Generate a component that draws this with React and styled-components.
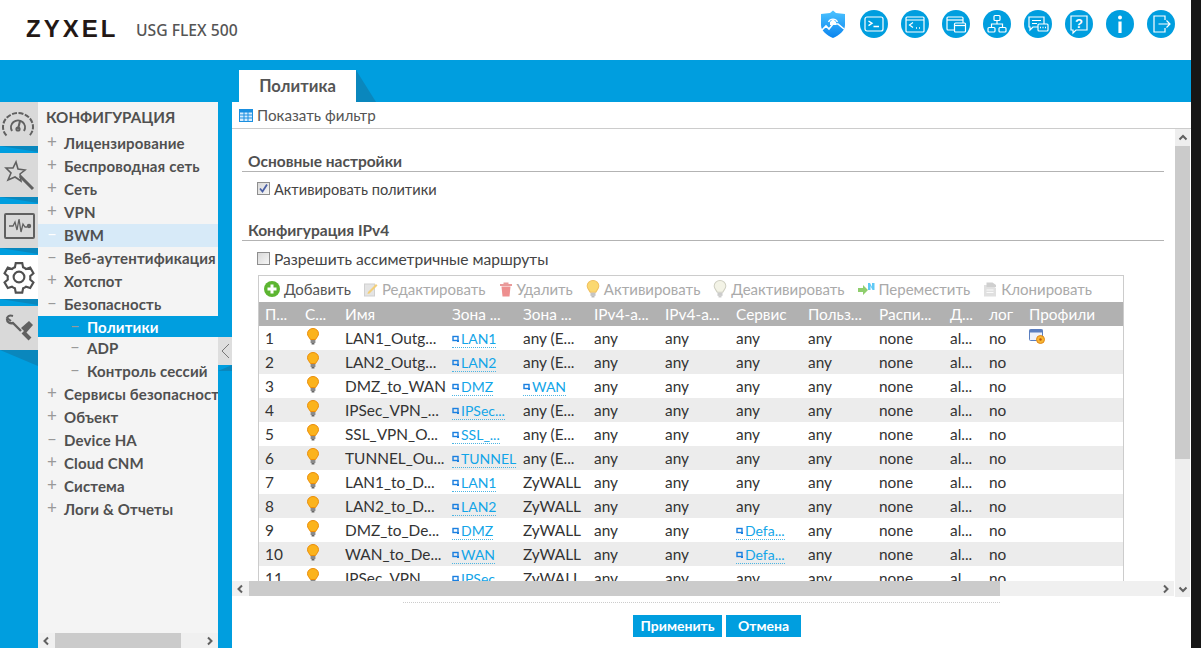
import React from "react";
import styled, { createGlobalStyle } from "styled-components";

const BLUE = "#009edf";
const DARK_BLUE = "#0a87bd";

const GlobalStyle = createGlobalStyle`
  html, body {
    margin: 0;
    padding: 0;
    background: #161616;
  }
  body {
    font-family: "Lato", "Noto Sans", sans-serif;
    overflow: hidden;
  }
`;

const Page = styled.div`
  display: flex;
  width: 1201px;
  height: 648px;
  overflow: hidden;
`;

const Main = styled.div`
  width: 1191px;
  display: flex;
  flex-direction: column;
  background: #fff;
`;

const Header = styled.header`
  height: 60px;
  display: flex;
  align-items: center;
  padding: 0 16px 0 26px;
  flex-shrink: 0;
`;

const Logo = styled.div`
  font-family: "Liberation Sans", sans-serif;
  font-weight: 700;
  font-size: 24px;
  letter-spacing: 3px;
  color: #231815;
  width: 110px;
  margin-bottom: 2px;
`;

const Model = styled.div`
  font-family: "Noto Sans", sans-serif;
  font-size: 15.7px;
  font-weight: 500;
  color: #555;
  margin-bottom: 1px;
`;

const HeaderIcons = styled.div`
  margin-left: auto;
  margin-bottom: 12px;
  display: flex;
  gap: 13px;
`;

const IconDisc = styled.svg`
  width: 28px;
  height: 28px;
  display: block;
`;

const TabBand = styled.div`
  height: 42px;
  flex-shrink: 0;
  background: ${BLUE};
  display: flex;
  align-items: flex-end;
  padding-left: 239px;
`;

const Tab = styled.div`
  width: 117px;
  height: 32px;
  background: #fff;
  color: #555;
  font-size: 16.6px;
  font-weight: 700;
  display: flex;
  align-items: center;
  justify-content: center;
  position: relative;
  &::after {
    content: "";
    position: absolute;
    left: 100%;
    top: 0;
    width: 20px;
    height: 32px;
    background: ${DARK_BLUE};
    clip-path: polygon(0 0, 100% 100%, 0 100%);
  }
`;

const Body = styled.div`
  flex: 1;
  min-height: 0;
  display: flex;
  background: ${BLUE};
`;

const Rail = styled.nav`
  width: 38px;
  flex-shrink: 0;
  display: flex;
  flex-direction: column;
  gap: 7px;
`;

const RailItem = styled.div`
  height: 44px;
  background: ${(p) => (p.$active ? "#fff" : "#d9d9d9")};
  display: flex;
  align-items: center;
  justify-content: center;
  position: relative;
  &::after {
    content: "";
    position: absolute;
    left: 0;
    top: 100%;
    width: 38px;
    height: ${(p) => (p.$last ? "16px" : "6px")};
    background: ${DARK_BLUE};
    clip-path: polygon(0 0, 100% 0, 100% 100%);
  }
`;

const NavPanel = styled.div`
  width: 180px;
  flex-shrink: 0;
  display: flex;
  flex-direction: column;
  background: #f4f4f4;
`;

const NavScroll = styled.div`
  flex: 1;
  min-height: 0;
  overflow: hidden;
`;

const NavTitle = styled.div`
  height: 30px;
  line-height: 30px;
  padding-left: 8px;
  font-size: 15.2px;
  font-weight: 700;
  color: #505050;
`;

const NavRow = styled.div`
  height: ${(p) => (p.$selected ? "21px" : "23px")};
  box-sizing: border-box;
  padding-bottom: ${(p) => (p.$selected ? "0" : "2px")};
  display: flex;
  align-items: center;
  white-space: nowrap;
  overflow: hidden;
  padding-left: ${(p) => (p.$sub ? "32px" : "9px")};
  background: ${(p) =>
    p.$selected ? BLUE : p.$current ? "#d7eaf8" : "transparent"};
  color: ${(p) => (p.$selected ? "#fff" : "#505050")};
  font-size: 15px;
  letter-spacing: 0.15px;
  font-weight: 700;
`;

const NavSign = styled.span`
  width: 17px;
  flex-shrink: 0;
  font-size: 17px;
  font-weight: 400;
  line-height: 1;
  color: ${(p) => (p.$light ? "#fff" : "#999")};
  margin-top: -2px;
`;

const HScrollBar = styled.div`
  height: 15px;
  flex-shrink: 0;
  margin-top: ${(p) => (p.$gap ? "1px" : "0")};
  background: #f0f0f0;
  display: flex;
  align-items: stretch;
`;

const ScrollArrow = styled.div`
  flex-shrink: 0;
  width: 17px;
  display: flex;
  align-items: center;
  justify-content: center;
`;

const ScrollThumb = styled.div`
  width: ${(p) => p.$w}px;
  background: #cbcbcb;
  flex-shrink: 0;
`;

const ScrollRest = styled.div`
  flex: 1;
`;

const Gutter = styled.div`
  width: 14px;
  flex-shrink: 0;
  padding-top: 235px;
`;

const Collapse = styled.div`
  height: 28px;
  background: #dedede;
  display: flex;
  align-items: center;
  justify-content: center;
  position: relative;
  &::after {
    content: "";
    position: absolute;
    left: 0;
    top: 100%;
    width: 14px;
    height: 6px;
    background: ${DARK_BLUE};
    clip-path: polygon(0 100%, 100% 0, 100% 100%);
  }
`;

const Content = styled.main`
  flex: 1;
  min-width: 0;
  display: flex;
  flex-direction: column;
  background: #fff;
`;

const FilterBar = styled.div`
  height: 26px;
  flex-shrink: 0;
  border-bottom: 1px solid #ccc;
  display: flex;
  align-items: center;
  gap: 4px;
  padding-left: 7px;
  font-size: 15.2px;
  color: #555;
`;

const Middle = styled.div`
  height: 468px;
  flex-shrink: 0;
  display: flex;
`;

const Left = styled.div`
  width: 942px;
  flex-shrink: 0;
  display: flex;
  flex-direction: column;
`;

const Scroller = styled.div`
  height: 452px;
  overflow: hidden;
  padding-left: 10px;
  flex-shrink: 0;
`;

const SectionTitle = styled.div`
  margin-top: ${(p) => p.$top}px;
  width: 922px;
  height: 21px;
  box-sizing: border-box;
  padding-left: 6px;
  line-height: 20px;
  border-bottom: 1px solid #b3b3b3;
  font-size: 15.5px;
  font-weight: 700;
  color: #505050;
`;

const CheckRow = styled.label`
  display: flex;
  align-items: center;
  gap: 4px;
  height: 18px;
  margin-top: ${(p) => p.$top}px;
  padding-left: 15px;
  font-size: ${(p) => p.$size}px;
  color: #444;
`;

const CheckBox = styled.span`
  width: 13px;
  height: 13px;
  margin-top: -2px;
  box-sizing: border-box;
  border: 1px solid #8e8e8e;
  background: linear-gradient(135deg, #d8d8d8, #f6f6f6);
  display: flex;
  align-items: center;
  justify-content: center;
`;

const TableWrap = styled.div`
  width: 866px;
  margin: 7px 0 0 16px;
  box-sizing: border-box;
  border: 1px solid #ccc;
  border-bottom: 0;
`;

const Toolbar = styled.div`
  height: 26px;
  display: flex;
  align-items: center;
  padding-left: 5px;
  gap: 13px;
  font-size: 15px;
`;

const ToolButton = styled.span`
  display: flex;
  align-items: center;
  gap: 4px;
  color: ${(p) => (p.$enabled ? "#555" : "#aaa")};
  white-space: nowrap;
`;

const Table = styled.table`
  border-collapse: collapse;
  table-layout: fixed;
  width: 864px;
  font-size: 15.4px;
`;

const Th = styled.th`
  height: 24px;
  padding: 0 0 0 6px;
  background: #b1b1b1;
  color: #fff;
  font-weight: 400;
  text-align: left;
  white-space: nowrap;
  overflow: hidden;
`;

const Tr = styled.tr`
  background: ${(p) => (p.$odd ? "#ececec" : "#fff")};
`;

const Td = styled.td`
  height: 24px;
  padding: 0 0 0 6px;
  color: #333;
  white-space: nowrap;
  overflow: hidden;
`;

const ObjLink = styled.span`
  display: inline-flex;
  align-items: center;
  gap: 1px;
  height: 17px;
  font-size: 14px;
  color: #12a5e8;
  border-bottom: 1px dotted #4db5e3;
`;

const BulbSvg = styled.svg`
  display: block;
  flex-shrink: 0;
  margin: ${(p) => (p.$inTable ? "-3px 0 0 2px" : "0")};
`;

const VScrollBar = styled.div`
  width: 15px;
  height: 468px;
  flex-shrink: 0;
  margin-left: 1px;
  background: #eeeeee;
  display: flex;
  flex-direction: column;
`;

const VArrow = styled.div`
  height: 17px;
  flex-shrink: 0;
  display: flex;
  align-items: center;
  justify-content: center;
`;

const VThumb = styled.div`
  height: 313px;
  background: #cbcbcb;
  flex-shrink: 0;
`;

const Footer = styled.footer`
  flex: 1;
  display: flex;
  flex-direction: column;
  align-items: flex-start;
`;

const DottedRule = styled.div`
  width: 597px;
  margin: 5px 0 0 171px;
  border-top: 1px dotted #ccc;
`;

const Buttons = styled.div`
  display: flex;
  gap: 4px;
  margin: 12px 0 0 401px;
`;

const Button = styled.button`
  height: 22px;
  width: ${(p) => p.$w}px;
  border: 0;
  padding: 0 0 1px;
  background: ${BLUE};
  color: #fff;
  font-family: inherit;
  font-size: 14px;
  font-weight: 700;
`;

const Edge = styled.div`
  flex: 1;
  background: #161616;
`;

const Disc = ({ children }) => (
  <IconDisc viewBox="0 0 28 28" fill="none" stroke="#fff" strokeWidth="1.2">
    <circle cx="14" cy="14" r="14" fill={BLUE} stroke="none" />
    {children}
  </IconDisc>
);

const ShieldIcon = () => (
  <IconDisc viewBox="0 0 28 28">
    <defs>
      <linearGradient id="shield" x1="0" y1="0" x2="0" y2="1">
        <stop offset="0" stopColor="#4cc3ff" />
        <stop offset="1" stopColor="#0a84ef" />
      </linearGradient>
    </defs>
    <path d="M14 0.5 L17 3 L26 4 V15 C26 21 20 25.5 14 28 C8 25.5 2 21 2 15 V4 L11 3 Z" fill="url(#shield)" />
    <path d="M9.5 12 A5 5 0 0 1 18.5 12" fill="none" stroke="#fff" strokeWidth="1.3" />
    <path d="M11 12 L14 9 L17 12 V15 H11 Z" fill="#fff" />
    <path d="M3 20 L7 16 L10 19 L14 14 L19 14 L25 19" fill="none" stroke="#fff" strokeWidth="1.6" />
  </IconDisc>
);

const headerIcons = [
  <Disc key="cli">
    <rect x="5" y="7" width="18" height="14" rx="2" />
    <path d="M8.5 11 L12 13.3 L8.5 15.6 M13.5 16.5 H19" strokeWidth="1.4" />
  </Disc>,
  <Disc key="web">
    <rect x="5" y="7" width="18" height="15" rx="1" />
    <path d="M5 10 H23 M12 12.5 L8.5 15 L12 17.5" />
    <path d="M15 18 H16 M18 18 H19" strokeWidth="1.4" />
  </Disc>,
  <Disc key="windows">
    <rect x="5" y="7" width="16" height="13" rx="1" />
    <path d="M5 10 H21" />
    <rect x="12.5" y="13" width="11" height="9" rx="1" fill={BLUE} />
    <path d="M12.5 15.5 H23.5" />
  </Disc>,
  <Disc key="net">
    <rect x="11" y="5.5" width="6" height="5" rx="1" />
    <rect x="5" y="17.5" width="7" height="4.5" rx="1" />
    <rect x="16" y="17.5" width="7" height="4.5" rx="1" />
    <path d="M14 10.5 V14 M8.5 17.5 V14 H19.5 V17.5" />
  </Disc>,
  <Disc key="chat">
    <path d="M5 7 H20 V17 H9 L6 20 V17 H5 Z" />
    <path d="M8 10.5 H17 M8 13.5 H13" />
    <rect x="14" y="14" width="10" height="7" rx="1" fill={BLUE} />
    <path d="M16 17.5 H17 M18.5 17.5 H19.5 M21 17.5 H22" strokeWidth="1.3" />
  </Disc>,
  <Disc key="help">
    <path d="M6 6 H22 V20 H11 L8 23 V20 H6 Z" />
    <text x="14" y="18" fontSize="13" fontWeight="700" textAnchor="middle" fill="#fff" stroke="none" fontFamily="Liberation Sans">?</text>
  </Disc>,
  <Disc key="info">
    <circle cx="14" cy="7.5" r="2" fill="#fff" stroke="none" />
    <path d="M14 11.5 V23" strokeWidth="3.2" />
  </Disc>,
  <Disc key="exit">
    <path d="M18 10 V6 H7 V22 H18 V18" />
    <path d="M11.5 14 H23 M19.5 10.5 L23 14 L19.5 17.5" />
  </Disc>,
];

const RailSvg = styled.svg`
  width: 34px;
  height: 34px;
  display: block;
`;

const railIcons = [
  <RailSvg key="gauge" viewBox="1 -2 34 34" fill="none" stroke="#606060" strokeWidth="2">
    <path d="M5.5 26.5 C3 24 2 21 2 18 C2 10 9 4 17 4 C25 4 32 10 32 18 C32 21 31 24 28.5 26.5" strokeDasharray="5 1.5" />
    <path d="M11 22 A7 7 0 1 1 23 22" />
    <path d="M17 20 L19 12" />
    <circle cx="17" cy="20" r="1.6" />
  </RailSvg>,
  <RailSvg key="wand" viewBox="0 0 34 34" fill="none" stroke="#606060" strokeWidth="2">
    <path d="M14 4 L16 11 L23 12 L18 16 L19 23 L13 19 L6 22 L9 15 L4 10 L11 10 Z" strokeWidth="1.6" />
    <path d="M18 18 L31 31" strokeWidth="3" />
  </RailSvg>,
  <RailSvg key="monitor" viewBox="0 0 34 34" fill="none" stroke="#606060" strokeWidth="2">
    <rect x="3" y="5" width="29" height="24" rx="1" />
    <path d="M7 17 H11 L13 13 L15 21 L17 10 L19 23 L21 15 L23 18 H25" strokeWidth="1.3" />
    <circle cx="27" cy="17" r="1.2" />
  </RailSvg>,
  <RailSvg key="gear" viewBox="0 0 24 24" fill="none" stroke="#505050" strokeWidth="1.5">
    <path d="M9.7 2.2 h4.6 l.6 3 a7.5 7.5 0 0 1 2.1 1.2 l2.9 -1 2.3 4 -2.3 2 a7.5 7.5 0 0 1 0 2.4 l2.3 2 -2.3 4 -2.9 -1 a7.5 7.5 0 0 1 -2.1 1.2 l-.6 3 h-4.6 l-.6 -3 a7.5 7.5 0 0 1 -2.1 -1.2 l-2.9 1 -2.3 -4 2.3 -2 a7.5 7.5 0 0 1 0 -2.4 l-2.3 -2 2.3 -4 2.9 1 a7.5 7.5 0 0 1 2.1 -1.2 z" />
    <circle cx="12" cy="12" r="3.8" />
  </RailSvg>,
  <RailSvg key="tools" viewBox="0 0 34 34" fill="none" stroke="#606060" strokeWidth="2.4">
    <path d="M5 8 C5 11 8 13 11 12 L19 20" />
    <path d="M11 5 C8 4 6 5 5 7 L9 10" strokeWidth="2" />
    <path d="M21 21 L28 28" strokeWidth="4" />
    <path d="M19 17 L27 10 L31 14 L24 22 Z" fill="#606060" stroke="none" />
  </RailSvg>,
];

const Chevron = ({ dir }) => {
  const paths = {
    left: "M6 1.5 L2.5 5 L6 8.5",
    right: "M3 1.5 L6.5 5 L3 8.5",
    up: "M1.5 6.5 L5 3 L8.5 6.5",
    down: "M1.5 3.5 L5 7 L8.5 3.5",
  };
  return (
    <svg width="10" height="10" viewBox="0 0 10 10" fill="none" stroke="#606060" strokeWidth="2">
      <path d={paths[dir]} />
    </svg>
  );
};

const Bulb = ({ off, inTable }) => (
  <BulbSvg $inTable={inTable} width={inTable ? 12 : 14} height={inTable ? 17 : 18} viewBox="0 0 12 17">
    <path
      d="M6 0.5 C9 0.5 11.5 2.7 11.5 5.7 C11.5 8.2 9.5 9.5 8.6 11.5 H3.4 C2.5 9.5 0.5 8.2 0.5 5.7 C0.5 2.7 3 0.5 6 0.5 Z"
      fill={off ? "#f3f3e6" : inTable ? "#fbb31c" : "#fbd870"}
      stroke={off ? "#cfcfc2" : inTable ? "#ea8d0c" : "#f0c060"}
    />
    <rect x="3.6" y="12" width="4.8" height="3" fill={off ? "#ccc" : inTable ? "#8a8a8a" : "#c4c4c4"} />
    <rect x="4.6" y="15" width="2.8" height="1.5" fill={off ? "#ccc" : inTable ? "#666" : "#bbb"} />
  </BulbSvg>
);

const ZoneMark = () => (
  <svg width="8" height="8" viewBox="0 0 8 8">
    <rect x="1" y="1.5" width="5" height="4" fill="none" stroke="#1a7fe0" strokeWidth="1.4" />
    <rect x="5" y="5" width="2" height="2" fill="#1a7fe0" />
  </svg>
);

const ProfileIcon = () => (
  <svg width="17" height="16" viewBox="0 0 17 16">
    <rect x="0.5" y="0.5" width="13" height="11" rx="1" fill="#eef2fa" stroke="#5b7fc0" />
    <rect x="0.5" y="0.5" width="13" height="3" fill="#5b7fc0" />
    <circle cx="11.5" cy="10.5" r="4" fill="#f7b731" stroke="#e0861a" />
    <circle cx="11.5" cy="10.5" r="1.2" fill="#c0560a" />
  </svg>
);

const GridIcon = () => (
  <svg width="14" height="13" viewBox="0 0 14 13">
    <rect x="0.5" y="0.5" width="13" height="12" fill="#d6ecff" stroke="#1a8fe0" />
    <rect x="0.5" y="0.5" width="13" height="3" fill="#1a8fe0" />
    <path d="M5 3 V12 M9 3 V12 M1 6 H13 M1 9 H13" stroke="#1a8fe0" strokeWidth="1" />
  </svg>
);

const AddIcon = () => (
  <svg width="16" height="16" viewBox="0 0 16 16">
    <circle cx="8" cy="8" r="8" fill="#5cb531" />
    <path d="M8 3.5 V12.5 M3.5 8 H12.5" stroke="#fff" strokeWidth="3" />
  </svg>
);

const EditIcon = () => (
  <svg width="14" height="15" viewBox="0 0 14 15">
    <rect x="0.5" y="2" width="10" height="12" fill="#e4e4e4" stroke="#d0d0d0" />
    <path d="M4 10 L12 2 L13.5 3.5 L5.5 11.5 L3.5 12 Z" fill="#f3cf7a" />
  </svg>
);

const TrashIcon = () => (
  <svg width="14" height="15" viewBox="0 0 13 15">
    <rect x="4" y="0.5" width="5" height="2" fill="#e99a9a" />
    <rect x="0.5" y="2" width="12" height="2" fill="#e99a9a" />
    <path d="M2 4.5 H11 L10 14.5 H3 Z" fill="#ee8f8f" />
  </svg>
);

const MoveIcon = () => (
  <svg width="17" height="14" viewBox="0 0 17 14">
    <path d="M0 6 H5 V3 L10 8 L5 13 V10 H0 Z" fill="#8fce6d" />
    <path d="M10 1 H12 L14 5 V1 H16.5 V8 H14.5 L12.5 4 V8 H10 Z" fill="#5fc9f5" />
  </svg>
);

const CloneIcon = () => (
  <svg width="14" height="15" viewBox="0 0 13 15">
    <path d="M0.5 3 H8 L12.5 6 V14.5 H0.5 Z" fill="#e0e0e0" />
    <path d="M3 0.5 H9 L12.5 3 V5 H3 Z" fill="#cfcfcf" />
    <path d="M3 8 H10 M3 10.5 H10" stroke="#fafafa" />
  </svg>
);

const navItems = [
  { label: "Лицензирование" },
  { label: "Беспроводная сеть" },
  { label: "Сеть" },
  { label: "VPN" },
  { label: "BWM", minus: true, current: true },
  { label: "Веб-аутентификация", minus: true },
  { label: "Хотспот" },
  { label: "Безопасность", minus: true },
  { label: "Политики", minus: true, sub: true, selected: true },
  { label: "ADP", minus: true, sub: true },
  { label: "Контроль сессий", minus: true, sub: true },
  { label: "Сервисы безопасности" },
  { label: "Объект" },
  { label: "Device HA", minus: true },
  { label: "Cloud CNM" },
  { label: "Система" },
  { label: "Логи & Отчеты" },
];

const columns = [
  ["П...", 40],
  ["С...", 40],
  ["Имя", 107],
  ["Зона ...", 71],
  ["Зона ...", 71],
  ["IPv4-а...", 71],
  ["IPv4-а...", 71],
  ["Сервис", 72],
  ["Польз...", 71],
  ["Распи...", 71],
  ["Д...", 39],
  ["лог", 40],
  ["Профили", 100],
];

const rules = [
  { name: "LAN1_Outg...", from: "LAN1", to: "any (E...", service: "any" },
  { name: "LAN2_Outg...", from: "LAN2", to: "any (E...", service: "any" },
  { name: "DMZ_to_WAN", from: "DMZ", toZone: "WAN", service: "any" },
  { name: "IPSec_VPN_...", from: "IPSec...", to: "any (E...", service: "any" },
  { name: "SSL_VPN_O...", from: "SSL_...", to: "any (E...", service: "any" },
  { name: "TUNNEL_Ou...", from: "TUNNEL", to: "any (E...", service: "any" },
  { name: "LAN1_to_D...", from: "LAN1", to: "ZyWALL", service: "any" },
  { name: "LAN2_to_D...", from: "LAN2", to: "ZyWALL", service: "any" },
  { name: "DMZ_to_De...", from: "DMZ", to: "ZyWALL", serviceObj: "Defa..." },
  { name: "WAN_to_De...", from: "WAN", to: "ZyWALL", serviceObj: "Defa..." },
  { name: "IPSec_VPN_...", from: "IPSec...", to: "ZyWALL", service: "any" },
];

const Zone = ({ name }) => (
  <ObjLink>
    <ZoneMark />
    {name}
  </ObjLink>
);

const App = () => (
  <Page>
    <GlobalStyle />
    <Main>
      <Header>
        <Logo>ZYXEL</Logo>
        <Model>USG FLEX 500</Model>
        <HeaderIcons>
          <ShieldIcon />
          {headerIcons}
        </HeaderIcons>
      </Header>
      <TabBand>
        <Tab>Политика</Tab>
      </TabBand>
      <Body>
        <Rail>
          {railIcons.map((icon, i) => (
            <RailItem key={i} $active={i === 3} $last={i === 4}>
              {icon}
            </RailItem>
          ))}
        </Rail>
        <NavPanel>
          <NavScroll>
            <NavTitle>КОНФИГУРАЦИЯ</NavTitle>
            {navItems.map((item) => (
              <NavRow
                key={item.label}
                $sub={item.sub}
                $selected={item.selected}
                $current={item.current}
              >
                <NavSign $light={item.current}>{item.minus ? "–" : "+"}</NavSign>
                {item.label}
              </NavRow>
            ))}
          </NavScroll>
          <HScrollBar $gap>
            <ScrollArrow>
              <Chevron dir="left" />
            </ScrollArrow>
            <ScrollThumb $w={126} />
            <ScrollRest />
            <ScrollArrow>
              <Chevron dir="right" />
            </ScrollArrow>
          </HScrollBar>
        </NavPanel>
        <Gutter>
          <Collapse>
            <svg width="9" height="16" viewBox="0 0 9 16" fill="none" stroke="#777">
              <path d="M8 1 L1 8 L8 15" />
            </svg>
          </Collapse>
        </Gutter>
        <Content>
          <FilterBar>
            <GridIcon />
            Показать фильтр
          </FilterBar>
          <Middle>
            <Left>
              <Scroller>
                <SectionTitle $top={22}>Основные настройки</SectionTitle>
                <CheckRow $top={8} $size={14.6}>
                  <CheckBox>
                    <svg width="11" height="11" viewBox="0 0 11 11" fill="none" stroke="#4a5fa5" strokeWidth="1.8">
                      <path d="M2 5.5 L4.5 8.5 L9 1.5" />
                    </svg>
                  </CheckBox>
                  Активировать политики
                </CheckRow>
                <SectionTitle $top={22}>Конфигурация IPv4</SectionTitle>
                <CheckRow $top={9} $size={15.6}>
                  <CheckBox />
                  Разрешить ассиметричные маршруты
                </CheckRow>
                <TableWrap>
                  <Toolbar>
                    <ToolButton $enabled>
                      <AddIcon />
                      Добавить
                    </ToolButton>
                    <ToolButton>
                      <EditIcon />
                      Редактировать
                    </ToolButton>
                    <ToolButton>
                      <TrashIcon />
                      Удалить
                    </ToolButton>
                    <ToolButton>
                      <Bulb />
                      Активировать
                    </ToolButton>
                    <ToolButton>
                      <Bulb off />
                      Деактивировать
                    </ToolButton>
                    <ToolButton>
                      <MoveIcon />
                      Переместить
                    </ToolButton>
                    <ToolButton>
                      <CloneIcon />
                      Клонировать
                    </ToolButton>
                  </Toolbar>
                  <Table>
                    <colgroup>
                      {columns.map(([, w], i) => (
                        <col key={i} width={w} />
                      ))}
                    </colgroup>
                    <thead>
                      <tr>
                        {columns.map(([title], i) => (
                          <Th key={i}>{title}</Th>
                        ))}
                      </tr>
                    </thead>
                    <tbody>
                      {rules.map((rule, i) => (
                        <Tr key={i} $odd={i % 2 === 1}>
                          <Td>{i + 1}</Td>
                          <Td>
                            <Bulb inTable />
                          </Td>
                          <Td>{rule.name}</Td>
                          <Td>
                            <Zone name={rule.from} />
                          </Td>
                          <Td>{rule.toZone ? <Zone name={rule.toZone} /> : rule.to}</Td>
                          <Td>any</Td>
                          <Td>any</Td>
                          <Td>{rule.serviceObj ? <Zone name={rule.serviceObj} /> : rule.service}</Td>
                          <Td>any</Td>
                          <Td>none</Td>
                          <Td>al...</Td>
                          <Td>no</Td>
                          <Td>{i === 0 && <ProfileIcon />}</Td>
                        </Tr>
                      ))}
                    </tbody>
                  </Table>
                </TableWrap>
              </Scroller>
              <HScrollBar>
                <ScrollArrow>
                  <Chevron dir="left" />
                </ScrollArrow>
                <ScrollThumb $w={751} />
                <ScrollRest />
                <ScrollArrow>
                  <Chevron dir="right" />
                </ScrollArrow>
              </HScrollBar>
            </Left>
            <VScrollBar>
              <VArrow>
                <Chevron dir="up" />
              </VArrow>
              <VThumb />
              <ScrollRest />
              <VArrow>
                <Chevron dir="down" />
              </VArrow>
            </VScrollBar>
          </Middle>
          <Footer>
            <DottedRule />
            <Buttons>
              <Button $w={89}>Применить</Button>
              <Button $w={75}>Отмена</Button>
            </Buttons>
          </Footer>
        </Content>
      </Body>
    </Main>
    <Edge />
  </Page>
);

export default App;
